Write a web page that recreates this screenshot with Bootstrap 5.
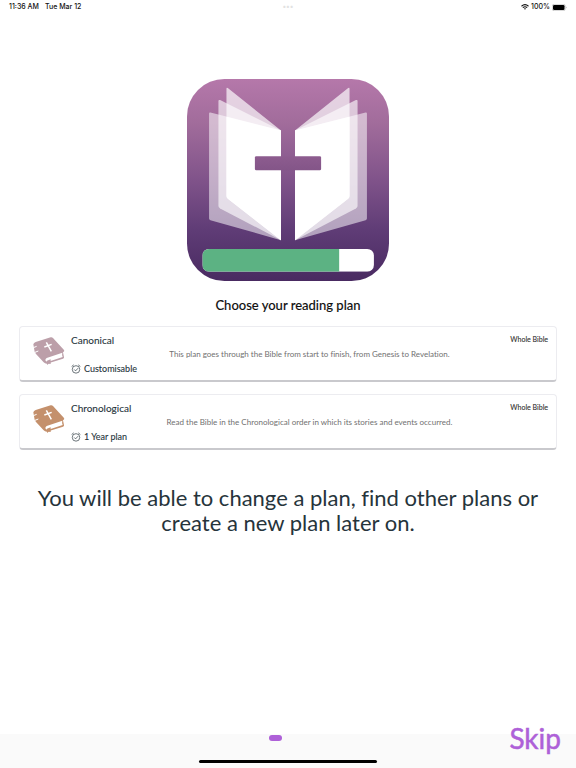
<!DOCTYPE html>
<html lang="en">
<head>
<meta charset="utf-8">
<meta name="viewport" content="width=device-width, initial-scale=1">
<title>Choose your reading plan</title>
<link href="https://cdn.jsdelivr.net/npm/bootstrap@5.3.0/dist/css/bootstrap.min.css" rel="stylesheet">
<style>
  body { font-family: Lato, sans-serif; font-variant-ligatures: none; color: #26343b; background: #fff; }
  .status { font: 500 7px/14px Inter, sans-serif; color: #111; padding: 0 9px; display: grid; grid-template-columns: 1fr auto 1fr; }
  .status-day { gap: 6px; }
  .status-power { gap: 2px; }
  .status-dots { color: #e2e2e2; }
  .app-logo { width: 202px; height: 202px; margin-top: 65px; }
  .page-title { font-size: 13px; line-height: 20px; font-weight: 500; color: #111; margin: 14px 0 11px; -webkit-text-stroke: .1px; }
  .plans { margin: 0 19px; gap: 12px; }
  .plan { height: 56px; border: 1px solid #ececf0; border-bottom: 2px solid #c9c9cd; border-radius: 4px; padding: 6px 8px 5px 13px; gap: 6px; color: #26343b; }
  .plan-book { width: 32px; height: 30px; margin-top: 3px; }
  .book-mauve { color: #bc9fa9; }
  .book-tan { color: #c4906c; }
  .plan-name { font-size: 10px; line-height: 14px; -webkit-text-stroke: .1px; }
  .plan-scope { font-size: 7px; line-height: 12px; color: #333; -webkit-text-stroke: .1px; }
  .plan-about { font-size: 8px; line-height: 14px; color: #707070; }
  .plan-time { font-size: 9px; line-height: 16px; gap: 3px; -webkit-text-stroke: .1px; }
  .note { font-size: 22px; line-height: 25px; margin: 35px 24px 0; }
  .bottom-bar { height: 34px; background: #fafafa; }
  .pager { padding: 1px 25px 0 0; }
  .pager-dot { width: 13px; height: 6px; border-radius: 3px; background: #ae60d8; }
  .home-line { width: 178px; height: 3px; border-radius: 2px; background: #000; margin-bottom: 5px; }
  .skip { right: 15px; bottom: 12px; font-size: 28px; line-height: 36px; color: #ae60d8; -webkit-text-stroke: .5px; }
</style>
<script src="https://cdn.jsdelivr.net/npm/bootstrap@5.3.0/dist/js/bootstrap.bundle.min.js" defer></script>
</head>
<body class="min-vh-100 d-flex flex-column">
<header class="status">
  <div class="status-day d-flex"><span>11:36 AM</span><span>Tue Mar 12</span></div>
  <span class="status-dots">•••</span>
  <div class="status-power d-flex justify-content-end align-items-center">
    <svg width="8" height="6" viewBox="0 0 16 12" fill="none" stroke="#111" stroke-width="2.2" aria-hidden="true"><path d="M1 4.5Q8-1.8 15 4.5M3.7 7.4Q8 3.5 12.300 7.400"/><path d="M8 11.500 5.800 9.200Q8 7.700 10.200 9.200Z" fill="#111" stroke="none"/></svg>
    <span>100%</span>
    <svg width="15" height="7" viewBox="0 0 30 14" aria-hidden="true"><rect x=".5" y=".5" width="26" height="13" rx="4" fill="#fff" stroke="#999"/><rect x="2" y="2" width="23" height="10" rx="2.500"/><path d="M28 5q2 2 0 4z" fill="#888"/></svg>
  </div>
</header>

<main class="flex-grow-1 d-flex flex-column">
  <svg class="app-logo align-self-center" viewBox="22 27 604 604" role="img" aria-label="Bible reading app">
    <defs>
      <linearGradient id="cover" x1="0" y1="0" x2="0" y2="1"><stop offset="0" stop-color="#b578aa"/><stop offset=".22" stop-color="#a16c9b"/><stop offset=".5" stop-color="#80538a"/><stop offset=".75" stop-color="#5f3c76"/><stop offset="1" stop-color="#492a61"/></linearGradient>
      <linearGradient id="crossbar" x1="0" y1="0" x2="0" y2="1"><stop offset="0" stop-color="#8d5c8f"/><stop offset="1" stop-color="#835588"/></linearGradient>
      <clipPath id="meter"><rect x="68" y="535" width="513" height="68" rx="20"/></clipPath>
      <g id="pages">
        <path d="M88 130q0-4 4-3L303 181V509L92 449q-4-1-4-5Z" fill="#fff" opacity=".53"/>
        <path d="M116 93q0-5 5-3L303 181V509L121 414q-5-3-5-7Z" fill="#fff" opacity=".62"/>
        <path d="M140 56q0-5 4-2L303 181V509L144 385q-4-3-4-8Z" fill="#fff" opacity=".68"/>
        <path d="M140 140 303 181V509L144 385q-4-3-4-8Z" fill="#fff"/>
      </g>
    </defs>
    <rect x="22" y="27" width="604" height="604" rx="112" fill="url(#cover)"/>
    <use href="#pages"/>
    <use href="#pages" transform="matrix(-1 0 0 1 648 0)"/>
    <rect x="225" y="258" width="198" height="42" rx="4" fill="url(#crossbar)"/>
    <g clip-path="url(#meter)"><path d="M68 535h513v68H68z" fill="#fff"/><path d="M68 535h409v68H68z" fill="#5cb283"/></g>
  </svg>
  <h1 class="page-title text-center">Choose your reading plan</h1>

  <svg class="d-none" aria-hidden="true">
    <symbol id="book" viewBox="0 0 96 90">
      <path d="M1 25Q2 20 8 18L53 4Q57 3 60 6L93 42Q95 45 92 47L90 49 93 64Q94 67 90 68L46 82Q38 85 32 79L9 54Q4 49 4 42Z" fill="currentColor"/>
      <path d="M41 66 88 50Q86 57 89 63L46 77Q39 78 37 73Q37 68 41 66Z" fill="#fff"/>
      <path d="M1 35 11 31M6 49 16 45" fill="none" stroke="#fff" stroke-width="3"/>
      <path d="M40 19 55 46M34 33 56 25" stroke="#fff" stroke-width="4.500"/>
      <path d="M42 74v13l5-4 6 1V70Z" fill="currentColor"/>
    </symbol>
    <symbol id="alarm" viewBox="0 0 24 24">
      <g fill="none" stroke="currentColor" stroke-width="1.600"><circle cx="12" cy="13" r="9"/><path d="m1.500 6 5-4M22.500 6l-5-4M7.500 13l3.500 3.500 6-6.500"/></g>
    </symbol>
  </svg>

  <div class="plans d-flex flex-column">
    <a href="#canonical" class="card plan flex-row text-decoration-none">
      <svg class="plan-book book-mauve flex-shrink-0" aria-hidden="true"><use href="#book"/></svg>
      <div class="flex-grow-1">
        <div class="d-flex justify-content-between"><span class="plan-name">Canonical</span><span class="plan-scope">Whole Bible</span></div>
        <div class="plan-about text-center">This plan goes through the Bible from start to finish, from Genesis to Revelation.</div>
        <div class="plan-time d-flex align-items-center"><svg width="10" height="10" aria-hidden="true"><use href="#alarm"/></svg>Customisable</div>
      </div>
    </a>
    <a href="#chronological" class="card plan flex-row text-decoration-none">
      <svg class="plan-book book-tan flex-shrink-0" aria-hidden="true"><use href="#book"/></svg>
      <div class="flex-grow-1">
        <div class="d-flex justify-content-between"><span class="plan-name">Chronological</span><span class="plan-scope">Whole Bible</span></div>
        <div class="plan-about text-center">Read the Bible in the Chronological order in which its stories and events occurred.</div>
        <div class="plan-time d-flex align-items-center"><svg width="10" height="10" aria-hidden="true"><use href="#alarm"/></svg>1 Year plan</div>
      </div>
    </a>
  </div>
  <p class="note text-center">You will be able to change a plan, find other plans or create a new plan later on.</p>
</main>

<footer class="bottom-bar position-relative d-flex flex-column justify-content-between">
  <div class="pager d-flex justify-content-center"><span class="pager-dot"></span></div>
  <div class="home-line align-self-center"></div>
  <button type="button" class="skip btn border-0 p-0 position-absolute">Skip</button>
</footer>
</body>
</html>
